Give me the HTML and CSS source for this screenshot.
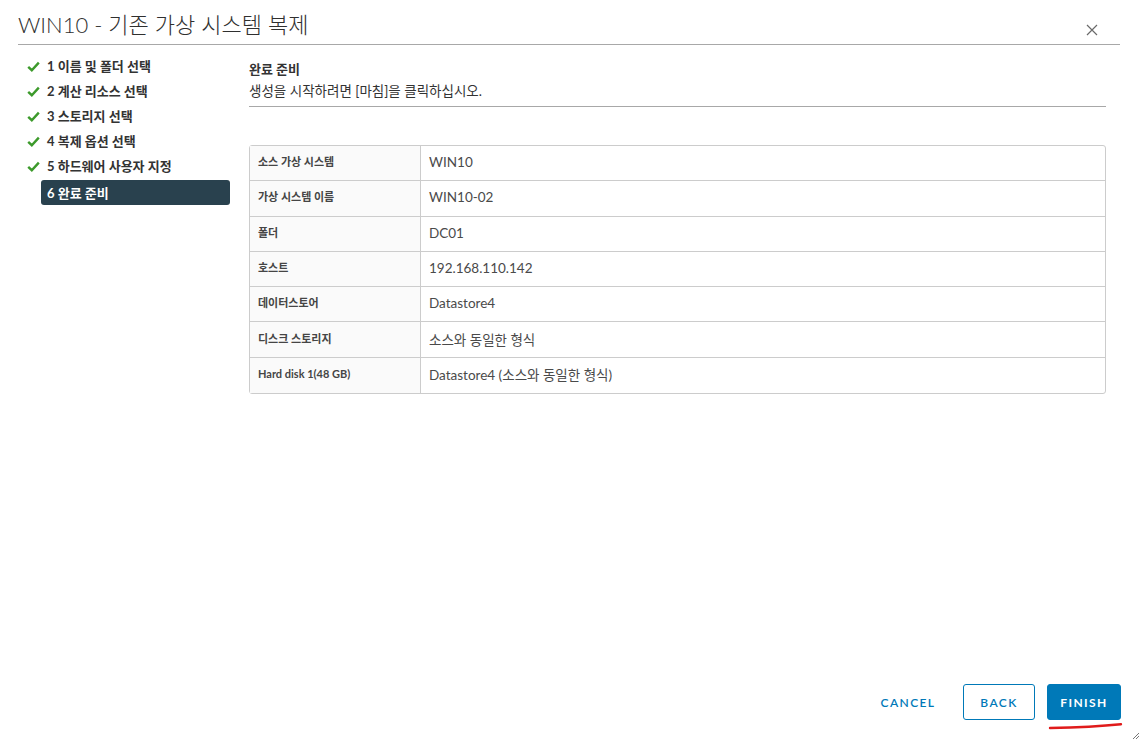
FILE: index.html
```html
<!DOCTYPE html>
<html lang="ko">
<head>
<meta charset="utf-8">
<title>WIN10 - 기존 가상 시스템 복제</title>
<link rel="stylesheet" href="styles.css">
</head>
<body>
<div class="modal">
  <header class="modal-header">
    <h1 class="modal-title">WIN10 - 기존 가상 시스템 복제</h1>
    <button class="close" aria-label="닫기">
      <svg width="12" height="12" viewBox="0 0 12 12"><path d="M1 1 L11 11 M11 1 L1 11" stroke="#6a6a6a" stroke-width="1.2" fill="none"/></svg>
    </button>
  </header>
  <div class="modal-body">
    <nav class="steps">
      <div class="step done"><span class="check"><svg width="13" height="11" viewBox="0 0 13 11"><path d="M1.2 5.8 L4.8 9.2 L11.8 1.6" stroke="#3c9a2b" stroke-width="2.4" fill="none"/></svg></span>1 이름 및 폴더 선택</div>
      <div class="step done"><span class="check"><svg width="13" height="11" viewBox="0 0 13 11"><path d="M1.2 5.8 L4.8 9.2 L11.8 1.6" stroke="#3c9a2b" stroke-width="2.4" fill="none"/></svg></span>2 계산 리소스 선택</div>
      <div class="step done"><span class="check"><svg width="13" height="11" viewBox="0 0 13 11"><path d="M1.2 5.8 L4.8 9.2 L11.8 1.6" stroke="#3c9a2b" stroke-width="2.4" fill="none"/></svg></span>3 스토리지 선택</div>
      <div class="step done"><span class="check"><svg width="13" height="11" viewBox="0 0 13 11"><path d="M1.2 5.8 L4.8 9.2 L11.8 1.6" stroke="#3c9a2b" stroke-width="2.4" fill="none"/></svg></span>4 복제 옵션 선택</div>
      <div class="step done"><span class="check"><svg width="13" height="11" viewBox="0 0 13 11"><path d="M1.2 5.8 L4.8 9.2 L11.8 1.6" stroke="#3c9a2b" stroke-width="2.4" fill="none"/></svg></span>5 하드웨어 사용자 지정</div>
      <div class="step active">6 완료 준비</div>
    </nav>
    <main class="content">
      <div class="content-head">
        <h2 class="content-title">완료 준비</h2>
        <p class="content-desc">생성을 시작하려면 [마침]을 클릭하십시오.</p>
      </div>
      <table class="summary">
        <tr><th>소스 가상 시스템</th><td>WIN10</td></tr>
        <tr><th>가상 시스템 이름</th><td>WIN10-02</td></tr>
        <tr><th>폴더</th><td>DC01</td></tr>
        <tr><th>호스트</th><td>192.168.110.142</td></tr>
        <tr><th>데이터스토어</th><td>Datastore4</td></tr>
        <tr><th>디스크 스토리지</th><td>소스와 동일한 형식</td></tr>
        <tr><th>Hard disk 1(48 GB)</th><td>Datastore4 (소스와 동일한 형식)</td></tr>
      </table>
    </main>
  </div>
  <footer class="modal-footer">
    <button class="btn btn-link">CANCEL</button>
    <button class="btn btn-outline">BACK</button>
    <div class="finish-wrap">
      <button class="btn btn-primary">FINISH</button>
      <svg class="annot" width="76" height="8" viewBox="0 0 76 8"><path d="M2 6 C 25 5.5, 50 4.5, 73 2.2" stroke="#e01b1b" stroke-width="2.4" stroke-linecap="round" fill="none"/></svg>
    </div>
  </footer>
  <svg class="resize" width="8" height="8" viewBox="0 0 8 8"><path d="M7 1 L1 7 M7 4 L4 7" stroke="#777" stroke-width="1" fill="none"/></svg>
</div>
</body>
</html>
```
FILE: styles.css
```css
* { box-sizing: border-box; }
html, body { margin: 0; padding: 0; background: #fff; }
body {
  font-family: "Lato", "Noto Sans CJK KR", sans-serif;
  color: #313131;
  width: 1141px;
  height: 741px;
  overflow: hidden;
}
.modal {
  position: relative;
  height: 741px;
  display: flex;
  flex-direction: column;
}
.modal-header {
  margin: 0 21px 0 18px;
  height: 45px;
  border-bottom: 1px solid #a8a8a8;
  display: flex;
  align-items: flex-end;
  justify-content: space-between;
}
.modal-title {
  margin: 0 0 4px 0;
  font-weight: 300;
  font-size: 22px;
  line-height: 30px;
  color: #2f2f2f;
  font-family: "Lato", "Noto Sans CJK KR", sans-serif;
}
.close {
  border: 0;
  background: none;
  padding: 0;
  margin: 0 21px 7px 0;
  width: 14px;
  height: 14px;
  display: flex;
  align-items: center;
  justify-content: center;
}
.modal-body {
  flex: 1;
  display: flex;
}
.steps {
  width: 249px;
  padding: 8px 0 0 27px;
  display: flex;
  flex-direction: column;
}
.step {
  display: flex;
  align-items: center;
  height: 25px;
  font-size: 13px;
  font-weight: 700;
  color: #333;
  font-family: "Lato", "Noto Sans CJK KR", sans-serif;
}
.check {
  width: 20px;
  display: inline-flex;
  align-items: center;
  padding-top: 2px;
}
.step.active {
  margin: 2px 19px 0 14px;
  background: #29414e;
  color: #fff;
  border-radius: 3px;
  padding-left: 6px;
  height: 25px;
}
.content {
  flex: 1;
  padding: 0 35px 0 0;
}
.content-head {
  border-bottom: 1px solid #a8a8a8;
  padding-top: 14px;
  height: 62px;
}
.content-title {
  margin: 0;
  font-size: 13px;
  font-weight: 700;
  line-height: 20px;
  color: #333;
}
.content-desc {
  margin: 2px 0 0;
  font-size: 13.5px;
  line-height: 20px;
  color: #333;
}
.summary {
  margin-top: 38px;
  width: 100%;
  border-collapse: separate;
  border-spacing: 0;
  border: 1px solid #ccc;
  border-radius: 3px;
}
.summary th, .summary td {
  height: 35.3px;
  padding: 0 8px;
  text-align: left;
  vertical-align: middle;
  border-bottom: 1px solid #ccc;
}
.summary tr:last-child th, .summary tr:last-child td { border-bottom: 0; }
.summary th {
  width: 171px;
  background: #fafafa;
  border-right: 1px solid #ccc;
  font-size: 11px;
  font-weight: 700;
  color: #454545;
  padding-bottom: 4px;
}
.summary td {
  font-size: 13.5px;
  color: #4a4a4a;
  padding-bottom: 2px;
}
.modal-footer {
  height: 57px;
  display: flex;
  align-items: flex-start;
  justify-content: flex-end;
  padding-right: 20px;
  gap: 12px;
}
.btn {
  font-family: "Lato", "Noto Sans", sans-serif;
  font-size: 12px;
  font-weight: 600;
  letter-spacing: 1.4px;
  height: 36px;
  border-radius: 3px;
  padding: 0 12px;
  cursor: pointer;
}
.btn-link {
  background: none;
  border: 1px solid transparent;
  color: #0079b8;
  margin-right: 1px;
  padding: 0 12px;
  width: 84px;
}
.btn-outline {
  background: #fff;
  border: 1px solid #0079b8;
  color: #0079b8;
  width: 72px;
}
.btn-primary {
  background: #0079b8;
  border: 1px solid #0079b8;
  color: #fff;
  width: 74px;
  font-weight: 700;
}
.finish-wrap {
  position: relative;
}
.annot {
  position: absolute;
  left: 1px;
  top: 38px;
}
.resize {
  position: absolute;
  right: 1px;
  bottom: 1px;
}
```
